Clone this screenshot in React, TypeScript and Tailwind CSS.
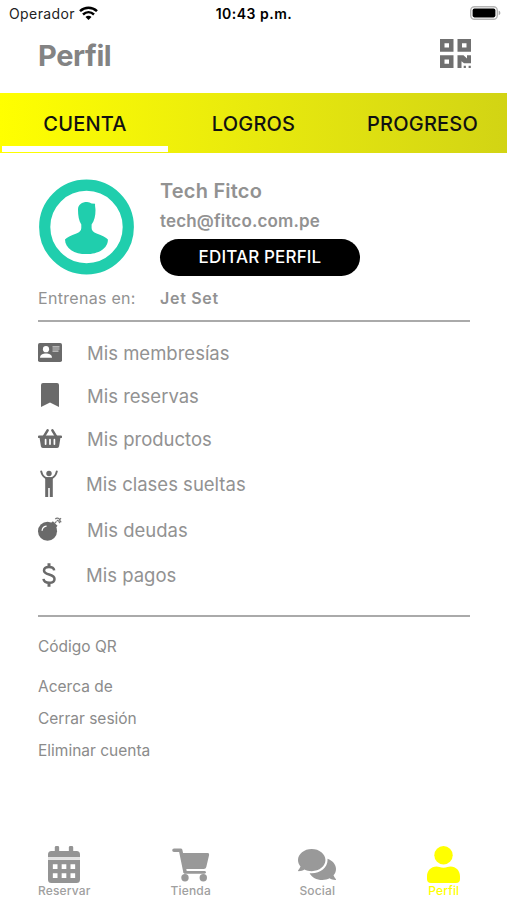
import React from "react";
import { FaComments } from "react-icons/fa";

const QrIcon = () => (
  <svg width="31" height="29" viewBox="0 0 31 29" fill="#707070">
    <path
      fillRule="evenodd"
      d="M0 0h13.500v12.800H0zM4.500 4.200v4.400h4.500V4.200zM17.500 0H31v12.800H17.500zM22 4.200v4.400h4.500V4.200zM0 16.200h13.500V29H0zM4.500 20.400v4.400h4.500v-4.400z"
    />
    <path d="M17.500 16.200h6l3.500 3.400v-3.400H31v8h-7l-2.500-2V29h-4zM23.700 26.800h2.200V29h-2.200zM28.600 26.800h2.200V29h-2.200z" />
  </svg>
);

const MembershipIcon = () => (
  <svg width="24" height="19" viewBox="0 0 24 19">
    <rect width="24" height="19" rx="1.8" fill="#6a6a6a" />
    <circle cx="8" cy="6.2" r="3.1" fill="#fff" />
    <path d="M2 14.8c0-3.1 3-4.3 6-4.3s6 1.200 6 4.300z" fill="#fff" />
    <path d="M14.500 3.800h7M14.500 6h7M14.500 8.200h6" stroke="#d0d0d0" strokeWidth="1.200" />
  </svg>
);

const BookmarkIcon = () => (
  <svg className="mb-[2px]" width="18" height="24" viewBox="0 0 18 24" fill="#6a6a6a">
    <path d="M2 0h14a2 2 0 0 1 2 2v22l-9-4.600L0 24V2a2 2 0 0 1 2-2z" />
  </svg>
);

const BasketIcon = () => (
  <svg width="24" height="19" viewBox="0 0 24 20" preserveAspectRatio="none" fill="#6a6a6a">
    <path d="M5.500 8.500 9.600 1.400M18.500 8.500 14.400 1.400" stroke="#6a6a6a" strokeWidth="2.500" strokeLinecap="round" />
    <path d="M1 6.800h22a1 1 0 0 1 1 1v.8a1 1 0 0 1-1 1h-.6l-1.300 8.600a2 2 0 0 1-2 1.700H4.900a2 2 0 0 1-2-1.700L1.600 9.600H1a1 1 0 0 1-1-1v-.8a1 1 0 0 1 1-1z" />
    <path d="M7.600 11.200v4.800M12 11.200v4.800M16.400 11.200v4.800" stroke="#fff" strokeWidth="1.700" strokeLinecap="round" />
  </svg>
);

const PersonArmsIcon = () => (
  <svg className="mt-px -ml-[2px]" width="18" height="28" viewBox="0 0 18 28" fill="#6a6a6a">
    <circle cx="9" cy="3.500" r="2.700" />
    <path d="M1.200 1.400C2 5 3.500 7.300 6.500 8.200h5C14.500 7.300 16 5 16.800 1.400" fill="none" stroke="#6a6a6a" strokeWidth="2" strokeLinecap="round" />
    <path d="M5.200 7.200h7.600v19.800H9.800v-9H8.200v9H5.200z" />
  </svg>
);

const BombIcon = () => (
  <svg className="mt-px" width="25" height="25" viewBox="0 0 25 25" fill="#6a6a6a">
    <circle cx="9.900" cy="14.300" r="9.900" />
    <path d="m13.500 5.800 2-2 4.800 4.800-1.900 2.500z" />
    <path
      d="M17.500 5.800 19.300 4M18 1.800c1.300-1.600 3.600-1.200 4.400.2 1 1.500.5 3-.6 3.800M19.500 3.200c1.300-.8 2 .3 1.500 1.200M24 .8l-1.200 1M24.300 4.500l-1.400-.4"
      fill="none"
      stroke="#777"
      strokeWidth="1.300"
    />
    <path d="M4.300 13.300c.3-2.400 2-4 4.200-4.400" fill="none" stroke="#fff" strokeWidth="1.300" strokeLinecap="round" />
  </svg>
);

const DollarIcon = () => (
  <svg className="-ml-[2px]" width="14" height="24" viewBox="0 0 14 24" fill="none" stroke="#6a6a6a" strokeWidth="2.500">
    <path d="M12.200 7.400C11.800 4.900 9.700 4 7 4 4 4 2 5.300 2 7.600c0 5.200 10.500 2.700 10.500 8.300 0 2.500-2.300 3.900-5.300 3.900-3.200 0-5.400-1.300-5.700-3.900" />
    <path d="M7 .3v4M7 19.500v4.200" strokeWidth="3" />
  </svg>
);

const CalendarIcon = () => (
  <svg width="32" height="37" viewBox="0 0 33 37" preserveAspectRatio="none" fill="#949494">
    <rect x="7" width="4.500" height="9" rx="1.400" />
    <rect x="21.500" width="4.500" height="9" rx="1.400" />
    <path d="M3.500 5h26A3.500 3.500 0 0 1 33 8.500V11.300H0V8.500A3.500 3.500 0 0 1 3.500 5z" />
    <path d="M0 11.300h33v2.600H0z" fill="#e2e2e2" />
    <path d="M0 13.900h33v19.600a3.500 3.500 0 0 1-3.500 3.500h-26A3.500 3.500 0 0 1 0 33.500z" />
    <path
      fill="#fff"
      d="M5 18.200h4.800V23H5zM14.100 18.200h4.800V23h-4.800zM23.200 18.200H28V23h-4.800zM5 27.200h4.800V32H5zM14.100 27.200h4.800V32h-4.800zM23.200 27.200H28V32h-4.800z"
    />
  </svg>
);

const CartIcon = () => (
  <svg width="38" height="34" viewBox="0 0 38 34" fill="#999">
    <path d="M2 2.200h6.600l4.400 21.400" fill="none" stroke="#999" strokeWidth="3.600" strokeLinecap="round" strokeLinejoin="round" />
    <path d="M9.500 5h26a1.600 1.600 0 0 1 1.600 2L34.300 19a2.600 2.600 0 0 1-2.500 2H12.500z" />
    <path d="M13 24.300h19.500" stroke="#999" strokeWidth="2.800" strokeLinecap="round" />
    <circle cx="13" cy="29.800" r="3.700" />
    <circle cx="31.300" cy="29.800" r="3.700" />
  </svg>
);

const UserIcon = () => (
  <svg width="33" height="37" viewBox="0 0 33 37" fill="#ffff00">
    <circle cx="16.500" cy="9.300" r="9.200" />
    <path d="M9.500 20.500c2.200 0 3.600 1.200 7 1.200s4.800-1.200 7-1.200c5.500 0 9.500 4.300 9.500 9.800v2.700a4 4 0 0 1-4 4H4a4 4 0 0 1-4-4v-2.700c0-5.500 4-9.800 9.500-9.800z" />
  </svg>
);

const AvatarIcon = () => (
  <svg width="96" height="96" viewBox="0 0 96 96">
    <circle cx="48.500" cy="48" r="41.800" fill="#fff" stroke="#20cead" strokeWidth="11.200" />
    <path
      fill="#20cead"
      d="M40 30.500c0-5 4-7.600 9-7.600 2.200 0 3.100.9 4.600 1.600l3.500.3c-.3 2 .4 3.800.4 6.200 0 6-1.100 10.600-3.900 14.400v3.500c0 2.700 1.800 4.400 5 5.600 5.700 2.100 9.500 4.100 11.300 5.900.2 9-9.700 14.700-21.500 14.700-12 0-21.300-5.700-21.400-14.700 1.900-1.800 5.700-3.800 11.400-5.900 3.200-1.200 4.900-2.900 4.900-5.600v-3.500c-2.400-3.500-3.300-8.500-3.300-14.900z"
    />
  </svg>
);

const menu = [
  { label: "Mis membresías", icon: <MembershipIcon />, row: "h-[43px]", text: "pl-px pt-[3px]" },
  { label: "Mis reservas", icon: <BookmarkIcon />, row: "h-[43px]", text: "pl-px pt-[3px]" },
  { label: "Mis productos", icon: <BasketIcon />, row: "h-[43px]", text: "pl-px pt-[2px]" },
  { label: "Mis clases sueltas", icon: <PersonArmsIcon />, row: "h-[46px]", text: "pt-[3px]" },
  { label: "Mis deudas", icon: <BombIcon />, row: "h-[46px]", text: "pl-px pt-[4px]" },
  { label: "Mis pagos", icon: <DollarIcon />, row: "h-[46px]", text: "pt-[2px]" },
];

const nav = [
  { label: "Reservar", icon: <CalendarIcon />, color: "text-[#a0a0a0]" },
  { label: "Tienda", icon: <CartIcon />, color: "text-[#a0a0a0]" },
  {
    label: "Social",
    icon: <FaComments className="h-[31px] w-[38px] text-[#999]" preserveAspectRatio="none" viewBox="0 32 576 448" />,
    color: "text-[#a0a0a0]",
  },
  { label: "Perfil", icon: <UserIcon />, color: "text-[#ffff00]" },
];

export default function App() {
  return (
    <div className="flex h-[900px] w-[507px] flex-col overflow-hidden bg-white font-['Inter',sans-serif] whitespace-nowrap text-[#929292]">
      <header className="flex h-[28px] shrink-0 items-center justify-between pr-[6px] pb-[2px] pl-[9px] text-[14px] text-[#222]">
        <div className="flex w-[180px] items-center gap-[4px]">
          <span className="tracking-[0.4px]">Operador</span>
          <svg className="-mt-px" width="19" height="14" viewBox="0 0 19 14" fill="none" stroke="#000" strokeWidth="2.500">
            <path d="M1 5.200c5-4.600 12-4.600 17 0M4 8.500c3.300-3 7.700-3 11 0" />
            <path d="m9.500 14-3-3c1.600-1.600 4.400-1.600 6 0z" fill="#000" stroke="none" />
          </svg>
        </div>
        <span className="-ml-[2px] font-semibold tracking-[0.5px] text-black">10:43 p.m.</span>
        <div className="flex w-[180px] justify-end">
          <svg width="31" height="14" viewBox="0 0 31 14">
            <rect x=".7" y=".7" width="26.600" height="12.600" rx="3.800" fill="#fff" stroke="#b5b5b5" strokeWidth="1.400" />
            <rect x="2.600" y="2.600" width="22.800" height="8.800" rx="1.800" fill="#000" />
            <path d="M28.700 4.800c2.200.5 2.200 3.900 0 4.400z" fill="#aaa" />
          </svg>
        </div>
      </header>

      <div className="flex h-[65px] shrink-0 items-start justify-between pr-[36px] pl-[38px]">
        <h1 className="mt-[10px] text-[29px] leading-[36px] font-bold tracking-[-0.4px] text-[#838383]">Perfil</h1>
        <div className="mt-[11px]">
          <QrIcon />
        </div>
      </div>

      <nav className="grid h-[60px] shrink-0 grid-cols-3 bg-linear-to-r from-[#ffff00] to-[#d2d414] text-[20px] font-medium tracking-[0.2px] text-[#111]">
        <div className="flex flex-col items-center justify-between pt-[16px] pb-px">
          <span className="pl-px leading-[30px]">CUENTA</span>
          <span className="h-[6px] w-[166px] bg-white" />
        </div>
        <span className="pt-[16px] text-center leading-[30px]">LOGROS</span>
        <span className="pt-[16px] text-center leading-[30px]">PROGRESO</span>
      </nav>

      <main className="flex flex-1 flex-col pr-[37px] pl-[38px]">
        <section className="flex h-[131px] shrink-0 gap-[26px] pt-[26px]">
          <AvatarIcon />
          <div className="flex flex-col items-start font-semibold">
            <span className="text-[20px] leading-[24px] tracking-[0.2px]">Tech Fitco</span>
            <span className="mt-[7px] text-[17px] leading-[22px] tracking-[0.15px]">tech@fitco.com.pe</span>
            <button className="mt-[7px] h-[37px] w-[200px] rounded-full bg-black pt-px text-[17px] font-medium tracking-[0.15px] text-white">
              EDITAR PERFIL
            </button>
          </div>
        </section>
        <div className="flex h-[38px] shrink-0 border-b-2 border-[#aaa] pt-[3px] text-[16px] leading-[22px]">
          <span className="w-[122px] tracking-[0.3px]">Entrenas en:</span>
          <span className="font-semibold tracking-[0.7px]">Jet Set</span>
        </div>

        <ul className="flex h-[295px] shrink-0 flex-col border-b-2 border-[#aaa] pt-[9px] text-[18.500px]">
          {menu.map((m) => (
            <li key={m.label} className={`flex shrink-0 items-center ${m.row}`}>
              <span className="flex w-[24px] justify-center">{m.icon}</span>
              <span className={`ml-[24px] ${m.text}`}>{m.label}</span>
            </li>
          ))}
        </ul>

        <div className="flex flex-col pt-[14px] text-[15.500px] leading-[32px] text-[#8b8b8b]">
          <span className="mb-[8px]">Código QR</span>
          <span>Acerca de</span>
          <span>Cerrar sesión</span>
          <span>Eliminar cuenta</span>
        </div>
      </main>

      <footer className="grid h-[57px] shrink-0 grid-cols-4 pl-px text-[12px]">
        {nav.map((n) => (
          <div key={n.label} className={`flex flex-col items-center ${n.color}`}>
            <span className="flex h-[41px] items-center pt-[2px]">{n.icon}</span>
            <span className="leading-[13px] font-medium tracking-[0.15px]">{n.label}</span>
          </div>
        ))}
      </footer>
    </div>
  );
}
